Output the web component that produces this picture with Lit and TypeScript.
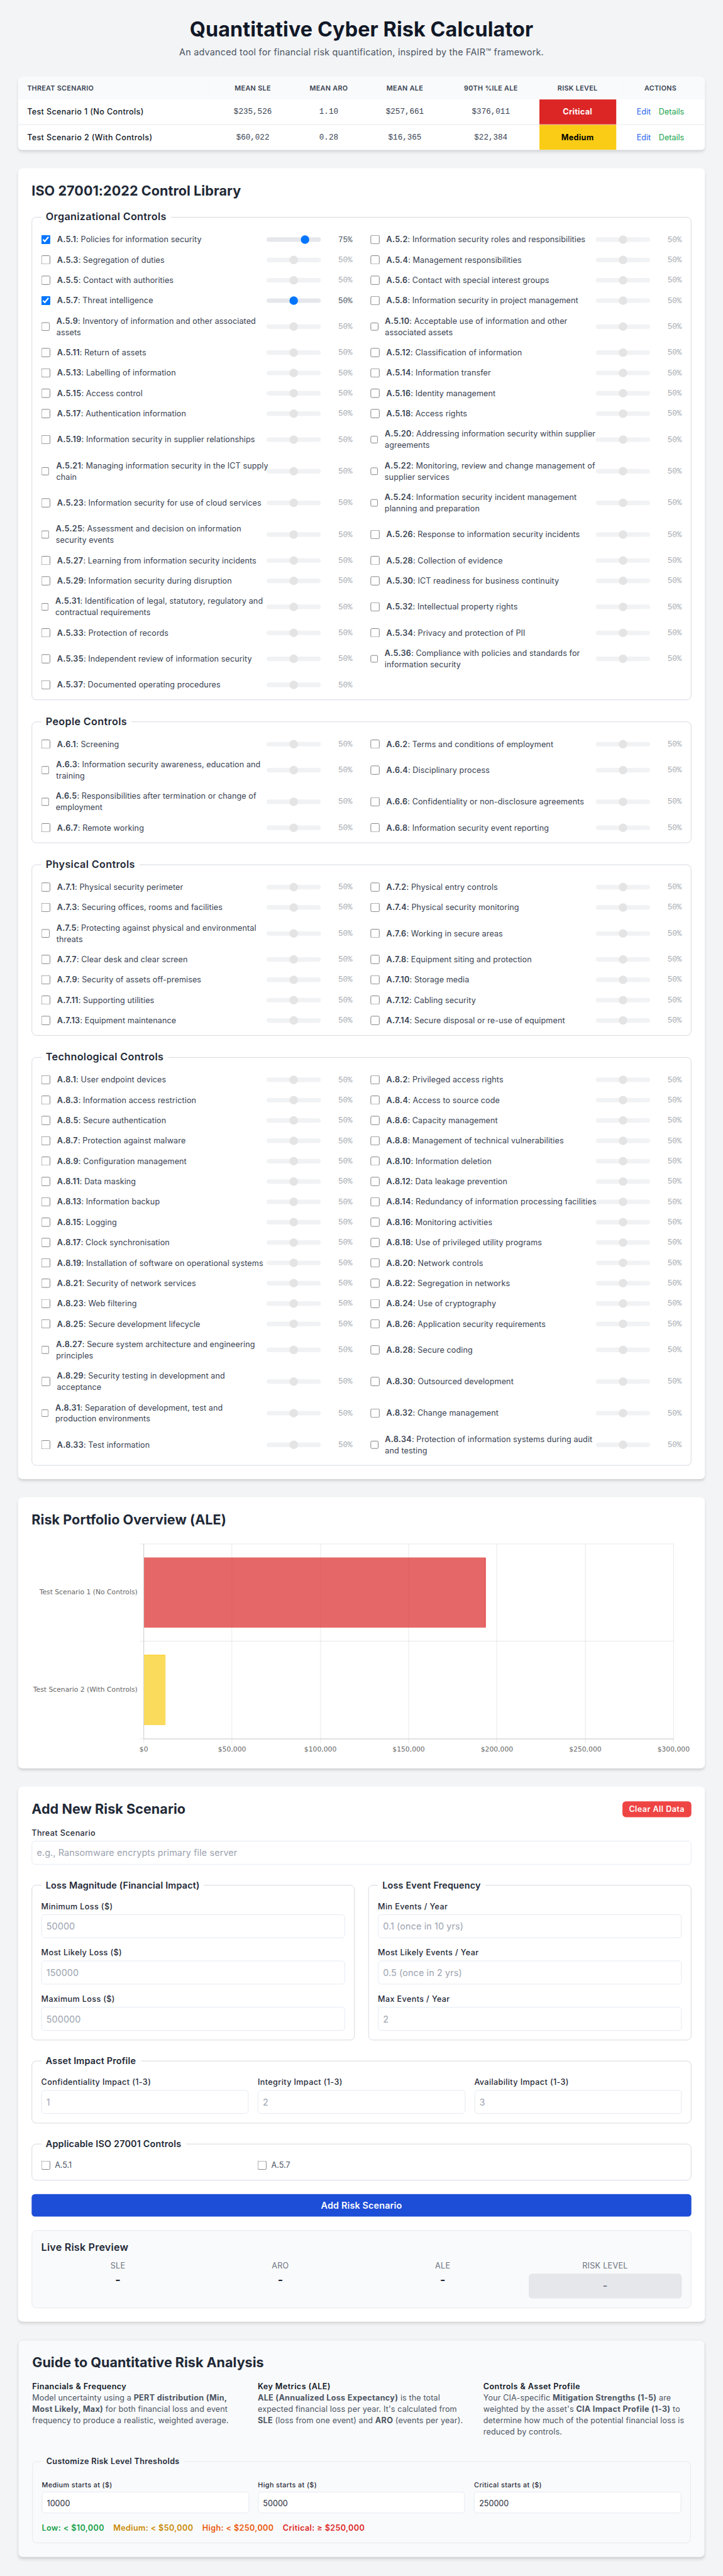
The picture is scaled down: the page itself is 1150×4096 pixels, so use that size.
import { LitElement, html, css, svg } from "lit";
import { customElement, property } from "lit/decorators.js";
import { classMap } from "lit/directives/class-map.js";

type Control = { code: string; name: string; on?: boolean; value?: number };

const group = (prefix: string, names: string[]): Control[] =>
  names.map((name, i) => ({ code: `${prefix}.${i + 1}`, name }));

const ORG = group("A.5", [
  "Policies for information security",
  "Information security roles and responsibilities",
  "Segregation of duties",
  "Management responsibilities",
  "Contact with authorities",
  "Contact with special interest groups",
  "Threat intelligence",
  "Information security in project management",
  "Inventory of information and other associated assets",
  "Acceptable use of information and other associated assets",
  "Return of assets",
  "Classification of information",
  "Labelling of information",
  "Information transfer",
  "Access control",
  "Identity management",
  "Authentication information",
  "Access rights",
  "Information security in supplier relationships",
  "Addressing information security within supplier agreements",
  "Managing information security in the ICT supply chain",
  "Monitoring, review and change management of supplier services",
  "Information security for use of cloud services",
  "Information security incident management planning and preparation",
  "Assessment and decision on information security events",
  "Response to information security incidents",
  "Learning from information security incidents",
  "Collection of evidence",
  "Information security during disruption",
  "ICT readiness for business continuity",
  "Identification of legal, statutory, regulatory and contractual requirements",
  "Intellectual property rights",
  "Protection of records",
  "Privacy and protection of PII",
  "Independent review of information security",
  "Compliance with policies and standards for information security",
  "Documented operating procedures",
]);
ORG[0] = { ...ORG[0], on: true, value: 75 };
ORG[6] = { ...ORG[6], on: true, value: 50 };

const PEOPLE = group("A.6", [
  "Screening",
  "Terms and conditions of employment",
  "Information security awareness, education and training",
  "Disciplinary process",
  "Responsibilities after termination or change of employment",
  "Confidentiality or non-disclosure agreements",
  "Remote working",
  "Information security event reporting",
]);

const PHYSICAL = group("A.7", [
  "Physical security perimeter",
  "Physical entry controls",
  "Securing offices, rooms and facilities",
  "Physical security monitoring",
  "Protecting against physical and environmental threats",
  "Working in secure areas",
  "Clear desk and clear screen",
  "Equipment siting and protection",
  "Security of assets off-premises",
  "Storage media",
  "Supporting utilities",
  "Cabling security",
  "Equipment maintenance",
  "Secure disposal or re-use of equipment",
]);

const TECH = group("A.8", [
  "User endpoint devices",
  "Privileged access rights",
  "Information access restriction",
  "Access to source code",
  "Secure authentication",
  "Capacity management",
  "Protection against malware",
  "Management of technical vulnerabilities",
  "Configuration management",
  "Information deletion",
  "Data masking",
  "Data leakage prevention",
  "Information backup",
  "Redundancy of information processing facilities",
  "Logging",
  "Monitoring activities",
  "Clock synchronisation",
  "Use of privileged utility programs",
  "Installation of software on operational systems",
  "Network controls",
  "Security of network services",
  "Segregation in networks",
  "Web filtering",
  "Use of cryptography",
  "Secure development lifecycle",
  "Application security requirements",
  "Secure system architecture and engineering principles",
  "Secure coding",
  "Security testing in development and acceptance",
  "Outsourced development",
  "Separation of development, test and production\u00a0environments",
  "Change management",
  "Test information",
  "Protection of information systems during audit and\u00a0testing",
]);

const base = css`
  :host {
    display: block;
  }
  *,
  *::before,
  *::after {
    box-sizing: border-box;
  }
  h1, h2, h3, p {
    margin: 0;
  }
  .card {
    background: #fff;
    border-radius: 8px;
    padding: 24px;
    box-shadow: 0 4px 6px -1px rgba(0, 0, 0, 0.1), 0 2px 4px -2px rgba(0, 0, 0, 0.1);
  }
  h2 {
    font-size: 24px;
    line-height: 32px;
    font-weight: 700;
    letter-spacing: 0.06px;
    color: #1f2937;
  }
  fieldset {
    margin: 0;
    min-width: 0;
    border: 1px solid #d1d5db;
    border-radius: 8px;
    padding: 16px;
  }
  legend {
    padding: 0 8px;
    font-size: 16px;
    line-height: 24px;
    font-weight: 600;
    letter-spacing: 0.2px;
    color: #1f2937;
  }
  input {
    font-family: inherit;
  }
  .box {
    width: 16px;
    height: 16px;
    margin: 0;
  }
`;

@customElement("control-group")
class ControlGroup extends LitElement {
  @property() heading = "";
  @property({ attribute: false }) items: Control[] = [];

  static styles = [
    base,
    css`
      legend {
        font-size: 18px;
        line-height: 28px;
        letter-spacing: 0.38px;
      }
      .grid {
        display: grid;
        grid-template-columns: 1fr 1fr;
        gap: 16px 32px;
      }
      .row {
        display: grid;
        grid-template-columns: 399px 96px 56px;
        align-items: center;
      }
      .name {
        display: flex;
        align-items: center;
        font-size: 14px;
        line-height: 20px;
        letter-spacing: 0.12px;
        color: #374151;
      }
      .name span {
        margin-left: 12px;
        margin-right: -4px;
      }
      .name strong {
        font-weight: 600;
        letter-spacing: 0.35px;
      }
      .slider {
        appearance: none;
        width: 96px;
        height: 8px;
        margin: 0;
        border-radius: 8px;
        background: #e5e7eb;
      }
      .pct {
        font: 14px/20px "Liberation Mono", monospace;
        color: #4b5563;
        text-align: right;
      }
      .off .slider,
      .off .pct {
        opacity: 0.5;
      }
    `,
  ];

  render() {
    return html`<fieldset>
      <legend>${this.heading}</legend>
      <div class="grid">
        ${this.items.map(
          (c) => html`<div class=${classMap({ row: true, off: !c.on })}>
            <label class="name"
              ><input class="box" type="checkbox" ?checked=${!!c.on} /><span
                ><strong>${c.code}</strong>: ${c.name}</span
              ></label
            >
            <input class="slider" type="range" min="0" max="100" value=${c.value ?? 50} ?disabled=${!c.on} />
            <span class="pct">${c.value ?? 50}%</span>
          </div>`
        )}
      </div>
    </fieldset>`;
  }
}

@customElement("ale-chart")
class AleChart extends LitElement {
  static styles = [
    base,
    css`
      svg {
        display: block;
        width: 1168px;
        height: 384px;
      }
      text {
        font: 12px "DejaVu Sans", sans-serif;
        fill: #666;
      }
      .end {
        text-anchor: end;
      }
      .mid {
        text-anchor: middle;
      }
      .grid {
        stroke: rgba(0, 0, 0, 0.1);
      }
      .axis {
        stroke: #cccccc;
      }
      .critical {
        fill: rgba(220, 38, 38, 0.7);
      }
      .critical-edge {
        stroke: #dc2626;
      }
      .medium {
        fill: rgba(250, 204, 21, 0.7);
      }
      .medium-edge {
        stroke: #facc15;
      }
    `,
  ];

  render() {
    const x = (i: number) => Math.floor(198.5 + i * 156.33) + 0.5;
    const labels = ["$0", "$50,000", "$100,000", "$150,000", "$200,000", "$250,000", "$300,000"];
    return html`<svg viewBox="0 0 1168 384">
      ${labels.map(
        (t, i) => svg`<line class="grid" x1=${x(i)} x2=${x(i)} y1="10.5" y2="363"></line>
          <text class="mid" x=${198.5 + i * 156.33} y="377.5">${t}</text>`
      )}
      ${[10.5, 182.5, 355.5].map((y) => svg`<line class="grid" x1="191" x2="1136.5" y1=${y} y2=${y}></line>`)}
      <line class="axis" x1="198.5" x2="1136.5" y1="355.5" y2="355.5"></line>
      <line class="axis" x1="198.5" x2="198.5" y1="10.5" y2="355.5"></line>
      <rect class="critical" x="199" y="34.4" width="604.6" height="124.2"></rect>
      <line class="critical-edge" x1="803.3" x2="803.3" y1="35" y2="158"></line>
      <rect class="medium" x="199" y="206.9" width="38" height="124.2"></rect>
      <line class="medium-edge" x1="199.5" x2="237" y1="207.4" y2="207.4"></line>
      <text class="end" x="187.5" y="100">Test Scenario 1 (No Controls)</text>
      <text class="end" x="187.5" y="272.5">Test Scenario 2 (With Controls)</text>
    </svg>`;
  }
}

@customElement("scenario-form")
class ScenarioForm extends LitElement {
  static styles = [
    base,
    css`
      .head {
        display: flex;
        justify-content: space-between;
        align-items: center;
        margin-bottom: 16px;
      }
      .clear {
        border: 0;
        border-radius: 6px;
        background: #ef4444;
        color: #fff;
        font: 600 14px/20px "Inter", sans-serif;
        letter-spacing: 0.48px;
        padding: 4px 12px;
      }
      .stack {
        display: flex;
        flex-direction: column;
        gap: 24px;
      }
      .two {
        display: grid;
        grid-template-columns: 1fr 1fr;
        gap: 24px;
      }
      .three {
        display: grid;
        grid-template-columns: 1fr 1fr 1fr;
        gap: 16px;
      }
      .fields {
        display: flex;
        flex-direction: column;
        gap: 16px;
      }
      .field {
        display: flex;
        flex-direction: column;
        gap: 4px;
        font-size: 14px;
        line-height: 20px;
        font-weight: 500;
        letter-spacing: 0.43px;
        color: #1f2937;
      }
      .text {
        width: 100%;
        height: 42px;
        padding: 8px;
        border: 1px solid #e2e8f0;
        border-radius: 6px;
        background: #fff;
        font-size: 16px;
        line-height: 24px;
        letter-spacing: 0.13px;
      }
      .text::placeholder {
        color: #9ca3af;
      }
      .pick {
        display: flex;
        align-items: center;
        gap: 8px;
        font-size: 14px;
        line-height: 20px;
        color: #4b5563;
      }
      .submit {
        border: 0;
        border-radius: 6px;
        background: #1d4ed8;
        color: #fff;
        font: 600 16px/24px "Inter", sans-serif;
        letter-spacing: 0.17px;
        padding: 8px 16px;
      }
      .preview {
        border: 1px solid #e5e7eb;
        border-radius: 8px;
        background: #f9fafb;
        padding: 16px;
      }
      h3 {
        font-size: 18px;
        line-height: 28px;
        font-weight: 600;
        letter-spacing: 0.2px;
        color: #1f2937;
        margin-bottom: 8px;
      }
      .four {
        display: grid;
        grid-template-columns: repeat(4, 1fr);
        gap: 16px;
        text-align: center;
      }
      .cap {
        font-size: 14px;
        line-height: 20px;
        letter-spacing: 0.33px;
        color: #6b7280;
      }
      .val {
        font-size: 20px;
        line-height: 28px;
        font-weight: 700;
        color: #1f2937;
      }
      .level {
        margin-top: 4px;
        border-radius: 6px;
        background: #e5e7eb;
        padding: 8px;
        font-size: 18px;
        line-height: 28px;
        font-weight: 600;
        color: #6b7280;
      }
    `,
  ];

  private field(label: string, placeholder: string) {
    return html`<label class="field">${label}<input class="text" placeholder=${placeholder} /></label>`;
  }

  render() {
    return html`<section class="card">
      <div class="head">
        <h2>Add New Risk Scenario</h2>
        <button class="clear">Clear All Data</button>
      </div>
      <div class="stack">
        ${this.field("Threat Scenario", "e.g., Ransomware encrypts primary file server")}
        <div class="two">
          <fieldset>
            <legend>Loss Magnitude (Financial Impact)</legend>
            <div class="fields">
              ${this.field("Minimum Loss ($)", "50000")} ${this.field("Most Likely Loss ($)", "150000")}
              ${this.field("Maximum Loss ($)", "500000")}
            </div>
          </fieldset>
          <fieldset>
            <legend>Loss Event Frequency</legend>
            <div class="fields">
              ${this.field("Min Events / Year", "0.1 (once in 10 yrs)")}
              ${this.field("Most Likely Events / Year", "0.5 (once in 2 yrs)")}
              ${this.field("Max Events / Year", "2")}
            </div>
          </fieldset>
        </div>
        <fieldset>
          <legend>Asset Impact Profile</legend>
          <div class="three">
            ${this.field("Confidentiality Impact (1-3)", "1")} ${this.field("Integrity Impact (1-3)", "2")}
            ${this.field("Availability Impact (1-3)", "3")}
          </div>
        </fieldset>
        <fieldset>
          <legend>Applicable ISO 27001 Controls</legend>
          <div class="three">
            <label class="pick"><input class="box" type="checkbox" />A.5.1</label>
            <label class="pick"><input class="box" type="checkbox" />A.5.7</label>
          </div>
        </fieldset>
        <button class="submit">Add Risk Scenario</button>
        <div class="preview">
          <h3>Live Risk Preview</h3>
          <div class="four">
            ${["SLE", "ARO", "ALE"].map(
              (t) => html`<div>
                <div class="cap">${t}</div>
                <div class="val">-</div>
              </div>`
            )}
            <div>
              <div class="cap">RISK LEVEL</div>
              <div class="level">-</div>
            </div>
          </div>
        </div>
      </div>
    </section>`;
  }
}

@customElement("risk-guide")
class RiskGuide extends LitElement {
  static styles = [
    base,
    css`
      .guide {
        background: #f9fafb;
        border: 1px solid #e5e7eb;
      }
      h2 {
        margin-bottom: 16px;
        letter-spacing: 0;
      }
      .cols {
        display: grid;
        grid-template-columns: 1fr 1fr 1fr;
        gap: 32px;
        font-size: 14px;
        line-height: 20px;
        letter-spacing: 0.15px;
        color: #4b5563;
      }
      h3 {
        font-size: 14px;
        line-height: 20px;
        font-weight: 600;
        letter-spacing: 0.48px;
        color: #111827;
      }
      strong {
        font-weight: 700;
        letter-spacing: 0.35px;
      }
      fieldset {
        margin-top: 32px;
        border-color: #e5e7eb;
        padding-top: 24px;
      }
      legend {
        font-size: 14px;
        line-height: 20px;
        letter-spacing: 0.41px;
      }
      .three {
        display: grid;
        grid-template-columns: 1fr 1fr 1fr;
        gap: 16px;
      }
      .field {
        display: flex;
        flex-direction: column;
        gap: 4px;
        font-size: 12px;
        line-height: 16px;
        font-weight: 500;
        letter-spacing: 0.44px;
        color: #1f2937;
      }
      .text {
        width: 100%;
        height: 38px;
        padding: 8px;
        border: 1px solid #e2e8f0;
        border-radius: 6px;
        background: #fff;
        color: #1f2937;
        font-size: 14px;
        line-height: 20px;
      }
      .levels {
        display: flex;
        gap: 16px;
        margin-top: 16px;
        font-size: 14px;
        line-height: 20px;
        font-weight: 600;
        letter-spacing: 0.43px;
      }
      .low {
        color: #16a34a;
      }
      .medium {
        color: #ca8a04;
      }
      .high {
        color: #ea580c;
      }
      .critical {
        color: #dc2626;
      }
    `,
  ];

  render() {
    return html`<section class="card guide">
      <h2>Guide to Quantitative Risk Analysis</h2>
      <div class="cols">
        <div>
          <h3>Financials &amp; Frequency</h3>
          <p>
            Model uncertainty using a <strong>PERT distribution (Min, Most Likely, Max)</strong> for both financial loss
            and event frequency to produce a realistic, weighted average.
          </p>
        </div>
        <div>
          <h3>Key Metrics (ALE)</h3>
          <p>
            <strong>ALE (Annualized Loss Expectancy)</strong> is the total expected financial loss per year. It's
            calculated from <strong>SLE</strong> (loss from one event) and <strong>ARO</strong> (events per year).
          </p>
        </div>
        <div>
          <h3>Controls &amp; Asset Profile</h3>
          <p>
            Your CIA-specific <strong>Mitigation Strengths (1-5)</strong> are weighted by the asset's
            <strong>CIA Impact Profile (1-3)</strong> to determine how much of the potential financial loss is reduced by
            controls.
          </p>
        </div>
      </div>
      <fieldset>
        <legend>Customize Risk Level Thresholds</legend>
        <div class="three">
          <label class="field">Medium starts at ($)<input class="text" value="10000" /></label>
          <label class="field">High starts at ($)<input class="text" value="50000" /></label>
          <label class="field">Critical starts at ($)<input class="text" value="250000" /></label>
        </div>
        <div class="levels">
          <span class="low">Low: &lt; $10,000</span><span class="medium">Medium: &lt; $50,000</span
          ><span class="high">High: &lt; $250,000</span><span class="critical">Critical: ≥ $250,000</span>
        </div>
      </fieldset>
    </section>`;
  }
}

@customElement("app-root")
class AppRoot extends LitElement {
  static styles = [
    base,
    css`
      :host {
        width: 1150px;
        height: 4096px;
        overflow: hidden;
        background: #f3f4f6;
      }
      .page {
        width: 1280px;
        padding: 32px;
        display: flex;
        flex-direction: column;
        gap: 32px;
        font-family: "Inter", sans-serif;
        color: #1f2937;
        transform: scale(0.8984375);
        transform-origin: 0 0;
      }
      header {
        text-align: center;
      }
      h1 {
        font-size: 36px;
        line-height: 40px;
        font-weight: 700;
        letter-spacing: 0.1px;
        color: #111827;
      }
      .sub {
        margin-top: 8px;
        font-size: 16px;
        line-height: 24px;
        letter-spacing: 0.25px;
        color: #4b5563;
      }
      .table {
        padding: 0;
        overflow: hidden;
      }
      table {
        width: 100%;
        table-layout: fixed;
        border-collapse: separate;
        border-spacing: 0;
        font-size: 14px;
        line-height: 20px;
        text-align: center;
      }
      .c1 { width: 349px; }
      .c2 { width: 133px; }
      .c3 { width: 136px; }
      .c4 { width: 133.5px; }
      .c5 { width: 171px; }
      .c6 { width: 136px; }
      th {
        background: #f9fafb;
        font-size: 12px;
        line-height: 16px;
        font-weight: 600;
        letter-spacing: 0.35px;
        color: #374151;
        text-transform: uppercase;
        padding: 12px 16px;
      }
      td {
        padding: 12px 16px;
        border-bottom: 1px solid #e5e7eb;
      }
      th:first-child,
      td:first-child {
        text-align: left;
      }
      .title {
        font-weight: 500;
        letter-spacing: 0.41px;
        color: #111827;
      }
      .num {
        font-family: "Liberation Mono", monospace;
        color: #374151;
      }
      .critical {
        background: #dc2626;
        color: #fff;
        font-weight: 700;
        letter-spacing: 0.35px;
      }
      .medium {
        background: #facc15;
        color: #000;
        font-weight: 700;
        letter-spacing: 0.35px;
      }
      .acts {
        display: flex;
        justify-content: center;
        gap: 14px;
      }
      .edit {
        color: #2563eb;
      }
      .details {
        color: #16a34a;
      }
      h2 {
        margin-bottom: 16px;
      }
      .groups {
        display: flex;
        flex-direction: column;
        gap: 24px;
      }
    `,
  ];

  private row(title: string, nums: string[], level: string) {
    return html`<tr>
      <td class="title">${title}</td>
      ${nums.map((n) => html`<td class="num">${n}</td>`)}
      <td class=${level.toLowerCase()}>${level}</td>
      <td>
        <div class="acts"><span class="edit">Edit</span><span class="details">Details</span></div>
      </td>
    </tr>`;
  }

  render() {
    return html`<div class="page">
      <header>
        <h1>Quantitative Cyber Risk Calculator</h1>
        <p class="sub">An advanced tool for financial risk quantification, inspired by the FAIR™ framework.</p>
      </header>
      <div class="card table">
        <table>
          <thead>
            <tr>
              <th class="c1">Threat Scenario</th>
              <th class="c2">Mean SLE</th>
              <th class="c3">Mean ARO</th>
              <th class="c4">Mean ALE</th>
              <th class="c5">90th %ile ALE</th>
              <th class="c6">Risk Level</th>
              <th>Actions</th>
            </tr>
          </thead>
          <tbody>
            ${this.row("Test Scenario 1 (No Controls)", ["$235,526", "1.10", "$257,661", "$376,011"], "Critical")}
            ${this.row("Test Scenario 2 (With Controls)", ["$60,022", "0.28", "$16,365", "$22,384"], "Medium")}
          </tbody>
        </table>
      </div>
      <section class="card">
        <h2>ISO 27001:2022 Control Library</h2>
        <div class="groups">
          <control-group heading="Organizational Controls" .items=${ORG}></control-group>
          <control-group heading="People Controls" .items=${PEOPLE}></control-group>
          <control-group heading="Physical Controls" .items=${PHYSICAL}></control-group>
          <control-group heading="Technological Controls" .items=${TECH}></control-group>
        </div>
      </section>
      <section class="card">
        <h2>Risk Portfolio Overview (ALE)</h2>
        <ale-chart></ale-chart>
      </section>
      <scenario-form></scenario-form>
      <risk-guide></risk-guide>
    </div>`;
  }
}
